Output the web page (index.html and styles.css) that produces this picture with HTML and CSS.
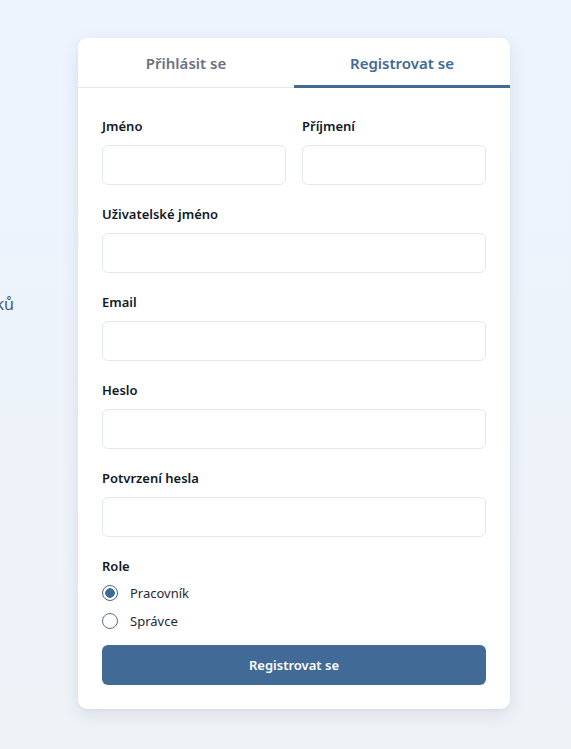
FILE: index.html
```html
<!DOCTYPE html>
<html lang="cs">
<head>
<meta charset="utf-8">
<title>Registrace</title>
<link rel="stylesheet" href="styles.css">
</head>
<body>
<div class="page">
  <div class="hero"><span class="hero-text">Jednoduchá správa výsledků</span></div>
  <div class="card">
    <div class="tabs">
      <button class="tab">Přihlásit se</button>
      <button class="tab active">Registrovat se</button>
    </div>
    <form class="form">
      <div class="row">
        <div class="field">
          <label class="label">Jméno</label>
          <input class="input" type="text">
        </div>
        <div class="field">
          <label class="label">Příjmení</label>
          <input class="input" type="text">
        </div>
      </div>
      <div class="field">
        <label class="label">Uživatelské jméno</label>
        <input class="input" type="text">
      </div>
      <div class="field">
        <label class="label">Email</label>
        <input class="input" type="email">
      </div>
      <div class="field">
        <label class="label">Heslo</label>
        <input class="input" type="password">
      </div>
      <div class="field">
        <label class="label">Potvrzení hesla</label>
        <input class="input" type="password">
      </div>
      <div class="field role">
        <span class="label">Role</span>
        <label class="radio"><input type="radio" name="role" checked><span>Pracovník</span></label>
        <label class="radio"><input type="radio" name="role"><span>Správce</span></label>
      </div>
      <button type="button" class="submit">Registrovat se</button>
    </form>
  </div>
</div>
</body>
</html>
```
FILE: styles.css
```css
* { box-sizing: border-box; }
html, body { margin: 0; height: 100%; }
body {
  font-family: "Noto Sans", "DejaVu Sans", sans-serif;
  background: linear-gradient(180deg, #edf4fe 0%, #eff3f8 100%);
  color: #111827;
  overflow: hidden;
}
.page {
  display: flex;
  align-items: flex-start;
  gap: 64px;
  padding-top: 38px;
}
.hero {
  width: 14px;
  flex: none;
  display: flex;
  justify-content: flex-end;
  overflow: hidden;
  margin-top: 254px;
}
.hero-text {
  white-space: nowrap;
  font-size: 16px;
  line-height: 24px;
  color: #3d5a80;
}
.card {
  width: 432px;
  flex: none;
  background: #fff;
  border-radius: 9px;
  box-shadow: 0 6px 18px rgba(30, 45, 70, 0.10), 0 1px 3px rgba(30, 45, 70, 0.05);
  overflow: hidden;
}
.tabs {
  display: flex;
  border-bottom: 1px solid #e5e7eb;
}
.tab {
  flex: 1;
  height: 50px;
  border: 0;
  background: transparent;
  font-family: inherit;
  font-size: 15px;
  font-weight: 600;
  color: #6b7280;
  border-bottom: 3px solid transparent;
  margin-bottom: -1px;
  padding: 3px 0 0;
  cursor: pointer;
}
.tab.active {
  color: #426a96;
  border-bottom-color: #426a96;
}
.form {
  display: flex;
  flex-direction: column;
  gap: 19px;
  padding: 28px 24px 24px;
}
.row {
  display: grid;
  grid-template-columns: 1fr 1fr;
  gap: 16px;
}
.field {
  display: flex;
  flex-direction: column;
}
.label {
  font-size: 13px;
  font-weight: 600;
  line-height: 20px;
  margin-bottom: 9px;
  color: #111827;
}
.input {
  height: 40px;
  width: 100%;
  border: 1px solid #e2e8f0;
  border-radius: 6px;
  padding: 0 12px;
  font-family: inherit;
  font-size: 14px;
  background: #fff;
  outline: none;
}
.role .label { margin-bottom: 7px; }
.radio {
  display: flex;
  align-items: center;
  gap: 12px;
  height: 20px;
  font-size: 13px;
  color: #1f2937;
  margin-bottom: 8px;
}
.radio:last-child { margin-bottom: 0; }
.radio input {
  appearance: none;
  -webkit-appearance: none;
  width: 16px;
  height: 16px;
  margin: 0;
  border: 1.5px solid #5a7391;
  border-radius: 50%;
  background: #fff;
}
.radio input:checked {
  border-color: #426a96;
  background: radial-gradient(circle, #426a96 0 4.5px, #fff 5px);
}
.submit {
  height: 40px;
  border: 0;
  border-radius: 6px;
  background: #426a96;
  color: #fff;
  font-family: inherit;
  font-size: 13px;
  font-weight: 600;
  margin-top: -5px;
  cursor: pointer;
}
```
